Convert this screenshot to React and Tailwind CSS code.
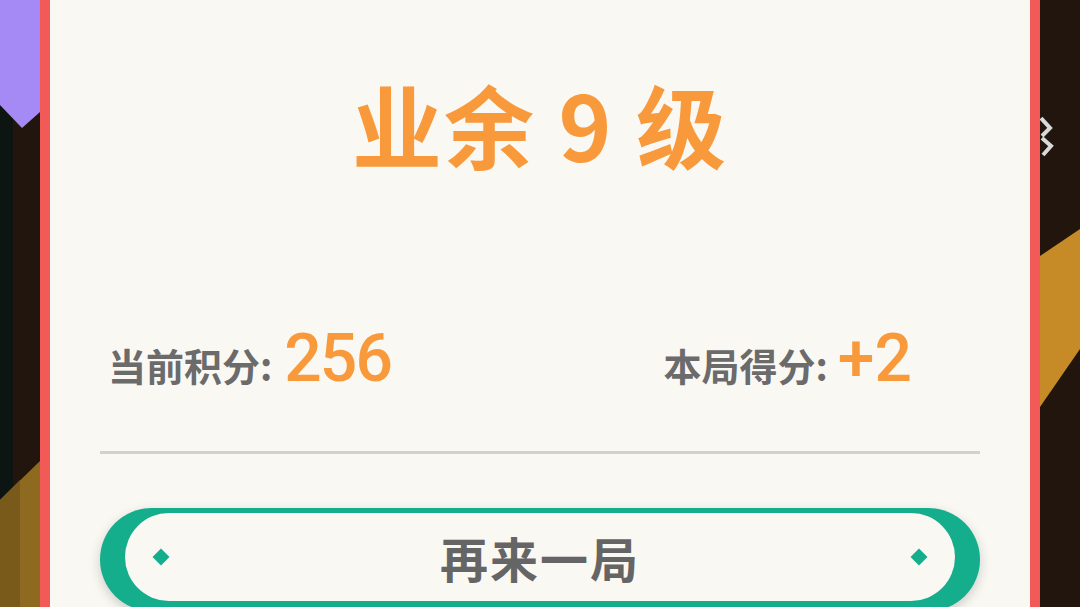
export default function App() {
  const cjk = { fontFamily: '"Noto Sans CJK SC", "Noto Sans", sans-serif' };
  const num = { fontFamily: 'Roboto, "Noto Sans", sans-serif' };

  return (
    <div className="w-[1080px] h-[607px] overflow-hidden flex bg-[#21150d]" style={cjk}>
      {/* left backdrop */}
      <div className="w-[40px] h-full shrink-0">
        <svg width="40" height="607" viewBox="0 0 40 607">
          <rect x="0" y="0" width="13" height="607" fill="#0d1512" />
          <rect x="13" y="0" width="27" height="607" fill="#21150d" />
          <polygon points="0,0 40,0 40,112 22,128 0,105" fill="#a58af6" />
          <polygon points="40,461 0,500 0,607 40,607" fill="#8d6a20" />
          <polygon points="20,480 0,500 0,607 20,607" fill="#7a5a1b" />
        </svg>
      </div>

      {/* card */}
      <div className="w-[1000px] h-full shrink-0 overflow-hidden border-x-[10px] border-[#f25a58] bg-[#faf8f3] px-[50px] flex flex-col">
        <div className="shrink-0 pt-[78px] text-center text-[90px] leading-none font-bold text-[#f89a3c] tracking-[2px]">
          业余 <span>9</span> 级
        </div>

        <div className="shrink-0 mt-[164px] flex items-end h-[60px]">
          <div className="ml-[8px] flex items-baseline">
            <span className="text-[38px] font-bold text-[#6b6b6b] leading-none">当前积分:</span>
            <span className="ml-[12px] text-[66px] font-medium text-[#f89a3c] leading-none tracking-[-2px]" style={num}>256</span>
          </div>
          <div className="ml-auto mr-[68px] flex items-baseline">
            <span className="text-[38px] font-bold text-[#6b6b6b] leading-none">本局得分:</span>
            <span className="ml-[10px] text-[66px] font-medium text-[#f89a3c] leading-none" style={num}>+2</span>
          </div>
        </div>

        <div className="shrink-0 mt-[59px] h-[3px] bg-[#d3d1cc]" />

        <div className="shrink-0 mt-[54px] rounded-full bg-[#14ae8c] pt-[5px] pb-[10px] px-[25px] shadow-[0_4px_12px_rgba(0,0,0,0.18)]">
          <div className="h-[88px] rounded-full bg-[#faf8f3] flex items-center justify-between px-[30px]">
            <div className="w-[12px] h-[12px] rotate-45 bg-[#14ae8c]" />
            <span className="text-[48px] font-bold text-[#656565] tracking-[2px]">再来一局</span>
            <div className="w-[12px] h-[12px] rotate-45 bg-[#14ae8c]" />
          </div>
        </div>
      </div>

      {/* right backdrop */}
      <div className="w-[40px] h-full shrink-0">
        <svg width="40" height="607" viewBox="0 0 40 607">
          <rect x="0" y="0" width="40" height="607" fill="#21150d" />
          <polygon points="0,256 40,229 40,349 0,407" fill="#c68b26" />
          <path d="M1,118 L10,128 L2,136 M2,138 L11,146 L3,155" stroke="#d9d9d9" strokeWidth="4" fill="none" />
        </svg>
      </div>
    </div>
  );
}
